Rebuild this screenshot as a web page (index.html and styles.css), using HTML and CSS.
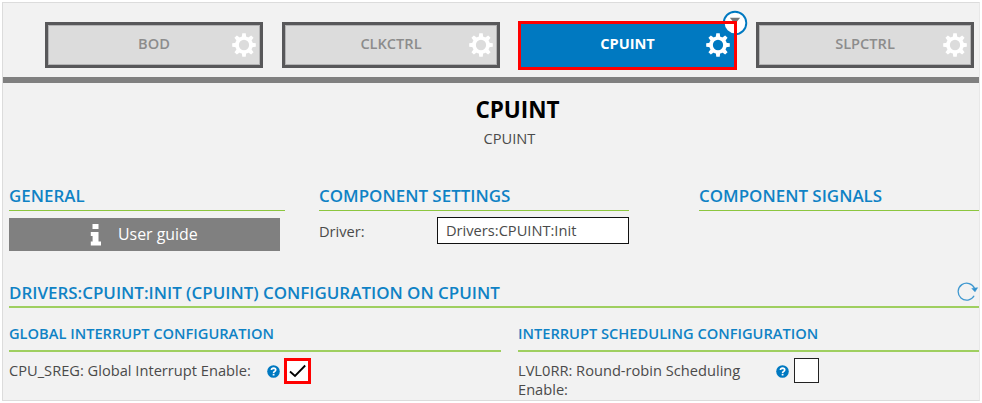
FILE: index.html
```html
<!DOCTYPE html>
<html lang="en">
<head>
<meta charset="utf-8">
<title>CPUINT</title>
<link rel="stylesheet" href="styles.css">
</head>
<body>
<svg class="defs" width="0" height="0" aria-hidden="true">
  <symbol id="gear" viewBox="-12 -12 24 24">
    <circle r="7" fill="none" stroke="currentColor" stroke-width="3.7"/>
    <g fill="currentColor">
      <path id="tooth" d="M-2.3-7.5-1.7-11.8H1.7L2.3-7.5Z"/>
      <use href="#tooth" transform="rotate(45)"/><use href="#tooth" transform="rotate(90)"/>
      <use href="#tooth" transform="rotate(135)"/><use href="#tooth" transform="rotate(180)"/>
      <use href="#tooth" transform="rotate(225)"/><use href="#tooth" transform="rotate(270)"/>
      <use href="#tooth" transform="rotate(315)"/>
    </g>
  </symbol>
  <symbol id="help" viewBox="0 0 13 13">
    <circle cx="6.5" cy="6.5" r="6.3" fill="#0079c1"/>
    <path d="M4.4 5Q4.6 3.2 6.6 3.2 8.7 3.3 8.7 5 8.6 6 7.5 6.5 6.6 6.9 6.6 8" fill="none" stroke="#fff" stroke-width="1.7"/>
    <path d="M5.7 8.8h1.8v1.7H5.7z" fill="#fff"/>
  </symbol>
</svg>
<main class="panel">
  <nav class="tabs">
    <div class="tab"><span>BOD</span><svg class="gear"><use href="#gear"/></svg></div>
    <div class="tab"><span>CLKCTRL</span><svg class="gear"><use href="#gear"/></svg></div>
    <div class="tab active">
      <svg class="filter" viewBox="0 0 26 26"><circle cx="13" cy="13" r="11.3" fill="#fff" stroke="#0079c1" stroke-width="1.9"/><path d="M7.8 7.8H18.2L14.2 12.5V14H11.8V12.5Z" fill="#777"/></svg>
      <span>CPUINT</span><svg class="gear"><use href="#gear"/></svg>
    </div>
    <div class="tab"><span>SLPCTRL</span><svg class="gear"><use href="#gear"/></svg></div>
  </nav>
  <header class="title">
    <h1>CPUINT</h1>
    <p>CPUINT</p>
  </header>
  <div class="overview">
    <section>
      <h2>GENERAL</h2>
      <div class="guide"><svg width="12" height="22" viewBox="0 0 12 22"><path d="M2.5 0H8.5V5H2.5zM.8 8H8.5V17.5H11V21.5H.8V17.5H2.6V12H.8z" fill="#fff"/></svg><span>User guide</span></div>
    </section>
    <section>
      <h2>COMPONENT SETTINGS</h2>
      <div class="driver"><label>Driver:</label><div class="field">Drivers:CPUINT:Init</div></div>
    </section>
    <section class="signals"><h2>COMPONENT SIGNALS</h2></section>
  </div>
  <div class="config-head">
    <h2>DRIVERS:CPUINT:INIT (CPUINT) CONFIGURATION ON CPUINT</h2>
    <svg width="22" height="20" viewBox="0 0 22 20" fill="none" stroke="#3f98d0"><path d="M17.1 13.8A8.5 8.5 0 1 1 17.6 6.6" stroke-width="1.3"/><path d="M14.8 6.5 20.6 5.7 18 9.8Z" fill="#3090cd" stroke-width=".6"/></svg>
  </div>
  <div class="config">
    <section>
      <h3>GLOBAL INTERRUPT CONFIGURATION</h3>
      <div class="row"><label>CPU_SREG: Global Interrupt Enable:</label><svg class="help"><use href="#help"/></svg><span class="box marked"><svg width="21" height="20" viewBox="0 0 21 20"><path d="M3 10.5 8 15 18.2 4.5" fill="none" stroke="#000" stroke-width="1.8"/></svg></span></div>
    </section>
    <section>
      <h3>INTERRUPT SCHEDULING CONFIGURATION</h3>
      <div class="row"><label class="wrap">LVL0RR: Round-robin Scheduling Enable:</label><svg class="help"><use href="#help"/></svg><span class="box"></span></div>
    </section>
  </div>
</main>
</body>
</html>
```
FILE: styles.css
```css
* { box-sizing: border-box; }
body { margin: 0; background: #fff; font-family: "Open Sans", sans-serif; font-size: 14.65px; color: #4a4a4a; }
h1, h2, h3, p { margin: 0; white-space: nowrap; }
.defs { display: block; position: absolute; }
.panel { width: 978px; height: 399px; margin: 2px 0 0 2px; border: 1px solid #dcdcdc; border-right-color: #e8e8e8; background: #f2f2f2; overflow: hidden; }

.tabs { display: grid; grid-template-columns: repeat(4, 218px); column-gap: 19px; height: 80px; padding: 19px 0 0 42px; border-bottom: 6px solid #808080; }
.tab { position: relative; display: flex; align-items: center; justify-content: center; height: 46px; padding-bottom: 4px; border: 3px solid #58585a; box-shadow: inset 0 0 0 1px #b4b4b5; background: #dcdcdc; color: #8c8c8c; font-size: 14.6px; font-weight: 600; }
.gear { position: absolute; right: 4px; top: 8px; width: 24px; height: 24px; color: #fff; }
.active { width: 219px; height: 49px; margin: -1px 0 0 -1px; padding-bottom: 5px; border: 0; box-shadow: none; background: #0079c1; color: #fff; font-weight: 700; }
.active::after { content: ""; position: absolute; inset: 0; border: 3px solid #f00; }
.active .gear { right: 7px; top: 12px; }
.filter { position: absolute; right: -11px; top: -11px; width: 26px; height: 26px; }

.title { text-align: center; padding: 11px 0 0 53px; height: 100px; }
.title h1 { font-size: 22.5px; line-height: 32px; font-weight: 700; color: #000; }
.title p { padding-right: 16px; line-height: 24px; }

h2 { font-size: 16.95px; line-height: 26px; height: 28px; font-weight: 600; color: #0f82c5; border-bottom: 1.5px solid #8cc63f; }
.overview { display: grid; grid-template-columns: 276px 310px 317px; column-gap: 34px; padding-left: 6px; height: 93px; }
.signals { margin-left: 36px; }
.guide { display: flex; align-items: center; gap: 16px; width: 271px; height: 33px; margin-top: 7px; padding-left: 81px; background: #808080; color: #fff; font-size: 15.9px; }
.guide span { margin-top: -1px; }
.driver { display: flex; align-items: center; height: 27px; margin-top: 6px; }
.driver label { width: 118px; }
.field { width: 192px; height: 27px; border: 1.5px solid #111; background: #fff; padding-left: 8px; line-height: 25px; }

.config-head { display: flex; justify-content: space-between; margin-left: 6px; height: 32px; border-bottom: 2px solid #9fcf60; }
.config-head h2 { border: 0; padding-top: 4px; }
.config-head svg { margin-top: 6px; }
.config { display: grid; grid-template-columns: 492px 462px; column-gap: 17px; padding-left: 6px; }
h3 { font-size: 14.65px; line-height: 20px; height: 44px; padding-top: 15px; font-weight: 600; color: #0f82c5; border-bottom: 2px solid #9fcf60; }
.row { display: flex; padding-top: 6px; }
.row label { width: 257px; padding-top: 3px; line-height: 19px; white-space: nowrap; }
.row .wrap { padding-right: 15px; white-space: normal; }
.help { width: 13px; height: 13px; margin: 7px 5px 0 1px; flex: none; }
.box { width: 25px; height: 25px; border: 1.5px solid #222; background: #fff; }
.marked { width: 27px; height: 26px; border: 3px solid #f00; margin-left: -1px; }
.marked svg { display: block; }
```
